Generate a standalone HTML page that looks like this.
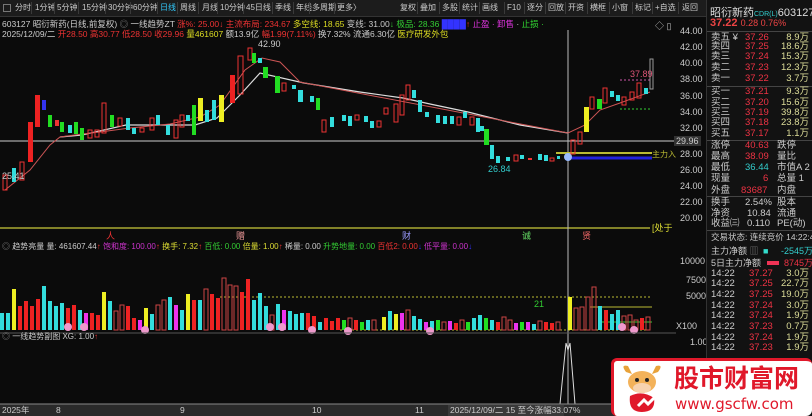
<!DOCTYPE html><html><head><meta charset="utf-8"><style>
*{margin:0;padding:0;box-sizing:border-box}
body{width:812px;height:416px;background:#0b0b0b;overflow:hidden;position:relative;font-family:"Liberation Sans","Noto Sans CJK SC",sans-serif;font-size:9px;color:#ccc}
.a{position:absolute;white-space:nowrap}
#tb{position:absolute;left:0;top:0;width:706px;height:17px;background:#1c1c1c;border-bottom:1px solid #333;font-size:8px;color:#ccc;white-space:nowrap;overflow:hidden}
#tb span{position:absolute;top:3px;line-height:10px}
#tb i{position:absolute;top:2px;height:12px;border-left:1px solid #3a3a3a}
#rp{position:absolute;left:706px;top:0;width:106px;height:416px;background:#121212;border-left:1px solid #333}
.r{position:absolute;left:4px;width:102px;font-size:9.5px;height:12px;line-height:12px;white-space:nowrap}
.r b{font-weight:normal;position:absolute}
.sep{position:absolute;left:0;width:106px;border-top:1px solid #444}
.ax{position:absolute;left:680px;font-size:9px;color:#ccc}
</style></head><body>
<div id="tb"><span style="left:3px;top:4px;width:8px;height:8px;border:1px solid #777"></span>
<span style="left:15px">分时</span><span style="left:35px">1分钟</span><span style="left:57px">5分钟</span><span style="left:82px">15分钟</span><span style="left:108px">30分钟</span><span style="left:133px">60分钟</span><span style="left:160px;color:#3cf">日线</span><span style="left:180px">周线</span><span style="left:202px">月线</span><span style="left:220px">10分钟</span><span style="left:246px">45日线</span><span style="left:275px">季线</span><span style="left:296px">年线</span><span style="left:312px">多周期</span><span style="left:337px">更多〉</span>
<span style="left:400px">复权</span><span style="left:420px">叠加</span><span style="left:442px">多股</span><span style="left:462px">统计</span><span style="left:482px">画线</span><span style="left:507px">F10</span><span style="left:527px">逐分</span><span style="left:548px">回放</span><span style="left:568px">开资</span><span style="left:590px">横框</span><span style="left:612px">小窗</span><span style="left:635px">标记</span><span style="left:655px">+自选</span><span style="left:682px">返回</span>
<i style="left:31px"></i><i style="left:54px"></i><i style="left:78px"></i><i style="left:105px"></i><i style="left:130px"></i><i style="left:157px"></i><i style="left:177px"></i><i style="left:198px"></i><i style="left:217px"></i><i style="left:243px"></i><i style="left:272px"></i><i style="left:293px"></i><i style="left:309px"></i><i style="left:334px"></i><i style="left:417px"></i><i style="left:439px"></i><i style="left:459px"></i><i style="left:479px"></i><i style="left:504px"></i><i style="left:524px"></i><i style="left:545px"></i><i style="left:565px"></i><i style="left:587px"></i><i style="left:609px"></i><i style="left:632px"></i><i style="left:652px"></i><i style="left:678px"></i>
</div>
<div class="a" style="left:2px;top:18px;font-size:8.5px">603127 昭衍新药(日线,前复权) <span style="color:#888">◎</span> 一线趋势ZT <span style="color:#e33">涨%: 25.00</span><span style="color:#e33">↓</span> <span style="color:#e33">主流布局: 234.67</span> <span style="color:#dd2">多空线: 18.65</span> 变线: 31.00<span style="color:#3c3">↓</span> <span style="color:#3c3">极品: 28.36</span> <span style="color:#33f">████</span><span style="color:#e33">↑</span> <span style="color:#d3d">止盈 · 卸售</span> · <span style="color:#3d3">止损 ·</span></div>
<div class="a" style="left:2px;top:28px;font-size:8.5px">2025/12/09/二 <span style="color:#e33">开28.50 高30.77 低28.50 收29.96</span> <span style="color:#dd2">量461607</span> 额13.9亿 <span style="color:#e33">幅1.99(7.11%)</span> 换7.32% 流通6.30亿 <span style="color:#dd2">医疗研发外包</span></div>
<div class="a" style="left:655px;top:19px;color:#bbb">◇ ▯</div>
<svg class="a" style="left:0;top:0" width="676" height="416">
<line x1="0" y1="141" x2="676" y2="141" stroke="#ccc" stroke-width="1"/>
<line x1="0" y1="228" x2="650" y2="228" stroke="#aa3" stroke-width="1.5"/>
<line x1="568" y1="30" x2="568" y2="405" stroke="#bbb" stroke-width="1"/>
<line x1="556" y1="153" x2="652" y2="153" stroke="#bb3" stroke-width="2"/>
<line x1="568" y1="158" x2="652" y2="158" stroke="#22d" stroke-width="3"/>
<circle cx="568" cy="157" r="4" fill="#9bf"/>
<line x1="620" y1="80" x2="650" y2="80" stroke="#c5a" stroke-dasharray="2,2"/>
<line x1="620" y1="109" x2="650" y2="109" stroke="#3c3" stroke-dasharray="2,2"/>
<polyline fill="none" stroke="#ddd" stroke-width="1.2" points="60,137 82,135 126,125 195,125 217,118 240,95 260,73 304,83 360,92 403,98 430,104 468,112 520,125 568,133"/>
<polyline fill="none" stroke="#c55" stroke-width="1" points="5,190 30,170 50,145 60,137 82,134 100,132 130,128 170,124 200,117 220,105 245,70 262,58 280,62 300,82 568,133 585,125 600,110 620,103 650,92"/>
<g stroke-width="1">
<rect x="3" y="175" width="4" height="15" fill="none" stroke="#e33"/><rect x="12" y="168" width="4" height="14" fill="#3dd"/><rect x="20" y="162" width="4" height="18" fill="none" stroke="#e33"/>
<rect x="28" y="122" width="5" height="40" fill="#e22"/><rect x="35" y="95" width="5" height="32" fill="#e22"/><rect x="42" y="100" width="4" height="10" fill="#33e"/>
<rect x="48" y="115" width="4" height="12" fill="#2d2"/><rect x="55" y="120" width="4" height="6" fill="#e33"/><rect x="60" y="122" width="4" height="10" fill="#2d2"/>
<rect x="68" y="125" width="4" height="8" fill="#3dd"/><rect x="74" y="122" width="4" height="12" fill="#2d2"/><rect x="80" y="128" width="4" height="12" fill="#2d2"/>
<rect x="88" y="130" width="4" height="8" fill="none" stroke="#e33"/><rect x="95" y="130" width="4" height="7" fill="none" stroke="#e33"/><rect x="102" y="103" width="4" height="30" fill="none" stroke="#e33"/>
<rect x="110" y="115" width="4" height="12" fill="#2d2"/><rect x="118" y="118" width="4" height="8" fill="none" stroke="#e33"/><rect x="126" y="118" width="4" height="12" fill="#3dd"/>
<rect x="132" y="128" width="4" height="6" fill="#3dd"/><rect x="140" y="128" width="4" height="4" fill="none" stroke="#e33"/><rect x="150" y="118" width="4" height="12" fill="none" stroke="#e33"/>
<rect x="156" y="115" width="4" height="10" fill="#3dd"/><rect x="166" y="125" width="4" height="10" fill="#3dd"/><rect x="174" y="120" width="4" height="18" fill="none" stroke="#e33"/>
<rect x="180" y="115" width="4" height="12" fill="none" stroke="#e33"/><rect x="186" y="115" width="4" height="6" fill="#3dd"/><rect x="192" y="105" width="4" height="30" fill="#2d2"/>
<rect x="198" y="98" width="5" height="23" fill="#ee2"/><rect x="205" y="110" width="4" height="12" fill="#3dd"/><rect x="212" y="100" width="4" height="20" fill="#3dd"/>
<rect x="219" y="95" width="5" height="27" fill="#ee2"/><rect x="230" y="75" width="5" height="28" fill="#e22"/><rect x="238" y="56" width="5" height="38" fill="none" stroke="#e33"/>
<rect x="248" y="48" width="4" height="12" fill="none" stroke="#e33"/><rect x="252" y="53" width="4" height="10" fill="#2d2"/><rect x="258" y="58" width="4" height="5" fill="#3dd"/>
<rect x="263" y="67" width="5" height="11" fill="#2d2"/><rect x="275" y="76" width="5" height="17" fill="#2d2"/><rect x="282" y="83" width="4" height="8" fill="none" stroke="#e33"/>
<rect x="292" y="85" width="4" height="4" fill="#3dd"/><rect x="298" y="90" width="5" height="12" fill="#3dd"/><rect x="310" y="96" width="4" height="6" fill="#3dd"/>
<rect x="316" y="98" width="4" height="12" fill="#2d2"/><rect x="322" y="120" width="4" height="12" fill="none" stroke="#e33"/><rect x="330" y="117" width="4" height="10" fill="#3dd"/>
<rect x="342" y="115" width="4" height="6" fill="#3dd"/><rect x="348" y="116" width="4" height="10" fill="#3dd"/><rect x="355" y="115" width="4" height="5" fill="none" stroke="#e33"/>
<rect x="364" y="116" width="4" height="6" fill="#3dd"/><rect x="370" y="121" width="4" height="7" fill="#3dd"/><rect x="377" y="121" width="4" height="6" fill="none" stroke="#e33"/>
<rect x="384" y="108" width="4" height="6" fill="none" stroke="#e33"/><rect x="394" y="104" width="4" height="18" fill="none" stroke="#e33"/><rect x="400" y="95" width="4" height="20" fill="none" stroke="#e33"/>
<rect x="406" y="85" width="4" height="15" fill="none" stroke="#e33"/><rect x="412" y="90" width="4" height="8" fill="#3dd"/><rect x="418" y="100" width="4" height="12" fill="#3dd"/>
<rect x="425" y="112" width="4" height="5" fill="#3dd"/><rect x="436" y="115" width="4" height="8" fill="#3dd"/><rect x="443" y="116" width="4" height="8" fill="#3dd"/>
<rect x="450" y="116" width="4" height="8" fill="#3dd"/><rect x="457" y="117" width="4" height="8" fill="none" stroke="#e33"/><rect x="463" y="112" width="4" height="6" fill="#3dd"/>
<rect x="470" y="117" width="4" height="8" fill="none" stroke="#e33"/><rect x="476" y="118" width="4" height="14" fill="#3dd"/><rect x="480" y="126" width="4" height="5" fill="#3dd"/>
<rect x="484" y="129" width="5" height="16" fill="#2d2"/><rect x="490" y="145" width="4" height="14" fill="#3dd"/><rect x="496" y="156" width="4" height="7" fill="#3dd"/>
<rect x="506" y="157" width="4" height="4" fill="#3dd"/><rect x="514" y="155" width="4" height="6" fill="none" stroke="#e33"/><rect x="520" y="155" width="4" height="4" fill="#3dd"/>
<rect x="528" y="158" width="4" height="2" fill="#e33"/><rect x="538" y="154" width="4" height="6" fill="#3dd"/><rect x="544" y="155" width="4" height="6" fill="#3dd"/>
<rect x="550" y="158" width="4" height="3" fill="none" stroke="#e33"/><rect x="557" y="156" width="3" height="3" fill="#3dd"/><rect x="571" y="140" width="4" height="14" fill="none" stroke="#e33"/>
<rect x="578" y="132" width="4" height="12" fill="none" stroke="#e33"/><rect x="584" y="107" width="5" height="25" fill="#ee2"/><rect x="590" y="97" width="4" height="12" fill="none" stroke="#e33"/>
<rect x="597" y="99" width="5" height="10" fill="#2d2"/><rect x="603" y="88" width="4" height="15" fill="none" stroke="#e33"/><rect x="610" y="91" width="4" height="6" fill="#3dd"/>
<rect x="616" y="95" width="4" height="6" fill="#3dd"/><rect x="622" y="97" width="4" height="8" fill="none" stroke="#e33"/><rect x="630" y="92" width="4" height="8" fill="none" stroke="#e33"/>
<rect x="637" y="83" width="4" height="15" fill="none" stroke="#e33"/><rect x="644" y="88" width="4" height="6" fill="#3dd"/><rect x="650" y="59" width="3" height="30" fill="none" stroke="#999"/>
</g>
<text x="258" y="47" fill="#ccc" font-size="9">42.90</text><text x="488" y="172" fill="#3cc" font-size="9">26.84</text><text x="2" y="179" fill="#ccc" font-size="9">25.41</text><text x="630" y="77" fill="#d57" font-size="9">37.89</text>
<text x="652" y="157" fill="#bb3" font-size="8">主力入</text>
<text x="106" y="239" fill="#e33" font-size="9">人</text><text x="236" y="239" fill="#e99" font-size="9">赠</text><text x="402" y="239" fill="#99f" font-size="9">财</text><text x="522" y="239" fill="#6d6" font-size="9">诚</text><text x="582" y="239" fill="#e66" font-size="9">贤</text>
<text x="652" y="231" fill="#dd3" font-size="9">[处于</text>
<text x="2" y="249" fill="#ccc" font-size="8"><tspan fill="#888">◎</tspan> 趋势亮量 量: 461607.44<tspan fill="#e33">↑</tspan> <tspan fill="#c3c">饱和度: 100.00</tspan><tspan fill="#e33">↑</tspan> <tspan fill="#dd3">换手: 7.32</tspan><tspan fill="#e33">↑</tspan> <tspan fill="#3c3">百低: 0.00</tspan> <tspan fill="#dd3">倍量: 1.00</tspan><tspan fill="#e33">↑</tspan> 稀量: 0.00 <tspan fill="#3c3">升势地量: 0.00</tspan> <tspan fill="#e33">百低2: 0.00</tspan><tspan fill="#33f">↓</tspan> <tspan fill="#c3c">低平量: 0.00</tspan><tspan fill="#33f">↓</tspan></text>
<line x1="220" y1="297" x2="652" y2="297" stroke="#bb3" stroke-dasharray="2,2"/><line x1="340" y1="330" x2="652" y2="330" stroke="#bb3" stroke-dasharray="2,2"/><line x1="590" y1="307" x2="652" y2="307" stroke="#bb3"/><line x1="600" y1="322" x2="652" y2="322" stroke="#3c3"/>
<text x="534" y="307" fill="#3c3" font-size="9">21</text>
<g id="vol">
<rect x="0" y="313" width="4" height="17" fill="#3dd"/><rect x="6" y="313" width="4" height="17" fill="#3dd"/><rect x="12" y="289" width="4" height="41" fill="#ee2"/><rect x="18" y="306" width="4" height="24" fill="#e22"/><rect x="24" y="301" width="4" height="29" fill="#e22"/><rect x="30" y="306" width="4" height="24" fill="#e22"/><rect x="36" y="299" width="4" height="31" fill="#e22"/><rect x="42" y="286" width="4" height="44" fill="#3dd"/><rect x="48" y="301" width="4" height="29" fill="#3dd"/><rect x="54" y="306" width="4" height="24" fill="#3dd"/><rect x="60" y="303" width="4" height="27" fill="#3dd"/><rect x="66" y="308" width="4" height="22" fill="#e22"/><rect x="72" y="305" width="4" height="25" fill="#e22"/><rect x="78" y="310" width="4" height="20" fill="#3dd"/><rect x="84" y="313" width="4" height="17" fill="#e3e"/><rect x="90" y="313" width="4" height="17" fill="#e22"/><rect x="96" y="315" width="4" height="15" fill="#e22"/><rect x="102" y="292" width="4" height="38" fill="#ee2"/><rect x="108" y="301" width="4" height="29" fill="#3dd"/><rect x="114" y="311" width="4" height="19" fill="none" stroke="#c44"/><rect x="120" y="305" width="4" height="25" fill="none" stroke="#c44"/><rect x="126" y="306" width="4" height="24" fill="#e22"/><rect x="132" y="318" width="4" height="12" fill="#e22"/><rect x="138" y="320" width="4" height="10" fill="#e3e"/><rect x="144" y="308" width="4" height="22" fill="#ee2"/><rect x="150" y="314" width="4" height="16" fill="#3dd"/><rect x="156" y="305" width="4" height="25" fill="none" stroke="#c44"/><rect x="162" y="300" width="4" height="30" fill="none" stroke="#c44"/><rect x="168" y="297" width="4" height="33" fill="#3dd"/><rect x="174" y="305" width="4" height="25" fill="#e3e"/><rect x="180" y="310" width="4" height="20" fill="#3dd"/><rect x="186" y="294" width="4" height="36" fill="#ee2"/><rect x="192" y="300" width="4" height="30" fill="#e22"/><rect x="198" y="300" width="4" height="30" fill="#3dd"/><rect x="204" y="289" width="4" height="41" fill="none" stroke="#c44"/><rect x="210" y="294" width="4" height="36" fill="#e22"/><rect x="216" y="298" width="4" height="32" fill="#e22"/><rect x="222" y="278" width="4" height="52" fill="none" stroke="#c44"/><rect x="228" y="285" width="4" height="45" fill="none" stroke="#c44"/><rect x="234" y="286" width="4" height="44" fill="none" stroke="#c44"/><rect x="240" y="292" width="4" height="38" fill="#e22"/><rect x="246" y="279" width="4" height="51" fill="#e22"/><rect x="252" y="300" width="4" height="30" fill="#3dd"/><rect x="258" y="293" width="4" height="37" fill="#3dd"/><rect x="264" y="306" width="4" height="24" fill="#3dd"/><rect x="270" y="315" width="4" height="15" fill="none" stroke="#c44"/><rect x="276" y="304" width="4" height="26" fill="#3dd"/><rect x="282" y="310" width="4" height="20" fill="#e3e"/><rect x="288" y="311" width="4" height="19" fill="#3dd"/><rect x="294" y="314" width="4" height="16" fill="#3dd"/><rect x="300" y="313" width="4" height="17" fill="#3dd"/><rect x="306" y="313" width="4" height="17" fill="#e22"/><rect x="312" y="316" width="4" height="14" fill="#e22"/><rect x="318" y="322" width="4" height="8" fill="#3dd"/><rect x="324" y="318" width="4" height="12" fill="#e22"/><rect x="330" y="321" width="4" height="9" fill="#e22"/><rect x="336" y="318" width="4" height="12" fill="#e22"/><rect x="342" y="320" width="4" height="10" fill="#2d2"/><rect x="348" y="318" width="4" height="12" fill="none" stroke="#c44"/><rect x="354" y="320" width="4" height="10" fill="#e22"/><rect x="360" y="322" width="4" height="8" fill="#2d2"/><rect x="366" y="320" width="4" height="10" fill="#3dd"/><rect x="372" y="320" width="4" height="10" fill="none" stroke="#c44"/><rect x="382" y="317" width="4" height="13" fill="#ee2"/><rect x="388" y="311" width="4" height="19" fill="#3dd"/><rect x="394" y="314" width="4" height="16" fill="#ee2"/><rect x="400" y="313" width="4" height="17" fill="#e3e"/><rect x="406" y="310" width="4" height="20" fill="none" stroke="#c44"/><rect x="412" y="316" width="4" height="14" fill="#3dd"/><rect x="418" y="319" width="4" height="11" fill="#3dd"/><rect x="424" y="322" width="4" height="8" fill="#e3e"/><rect x="430" y="321" width="4" height="9" fill="#3dd"/><rect x="436" y="320" width="4" height="10" fill="#2d2"/><rect x="442" y="322" width="4" height="8" fill="none" stroke="#c44"/><rect x="448" y="321" width="4" height="9" fill="#e3e"/><rect x="454" y="323" width="4" height="7" fill="#e22"/><rect x="460" y="320" width="4" height="10" fill="none" stroke="#c44"/><rect x="466" y="322" width="4" height="8" fill="#2d2"/><rect x="472" y="318" width="4" height="12" fill="#3dd"/><rect x="478" y="315" width="4" height="15" fill="#3dd"/><rect x="484" y="318" width="4" height="12" fill="#2d2"/><rect x="490" y="320" width="4" height="10" fill="#3dd"/><rect x="496" y="322" width="4" height="8" fill="#e22"/><rect x="502" y="317" width="4" height="13" fill="none" stroke="#c44"/><rect x="508" y="320" width="4" height="10" fill="none" stroke="#c44"/><rect x="514" y="323" width="4" height="7" fill="#e3e"/><rect x="520" y="322" width="4" height="8" fill="#2d2"/><rect x="526" y="322" width="4" height="8" fill="#e3e"/><rect x="532" y="324" width="4" height="6" fill="#3dd"/><rect x="538" y="321" width="4" height="9" fill="none" stroke="#c44"/><rect x="544" y="322" width="4" height="8" fill="#e22"/><rect x="550" y="323" width="4" height="7" fill="#e22"/><rect x="556" y="322" width="4" height="8" fill="none" stroke="#c44"/><rect x="568" y="297" width="4" height="33" fill="#ee2"/><rect x="574" y="308" width="4" height="22" fill="none" stroke="#c44"/><rect x="580" y="307" width="4" height="23" fill="none" stroke="#c44"/><rect x="586" y="297" width="4" height="33" fill="none" stroke="#c44"/><rect x="592" y="287" width="4" height="43" fill="none" stroke="#c44"/><rect x="598" y="306" width="4" height="24" fill="#3dd"/><rect x="604" y="310" width="4" height="20" fill="#e22"/><rect x="610" y="314" width="4" height="16" fill="#3dd"/><rect x="616" y="310" width="4" height="20" fill="#3dd"/><rect x="622" y="316" width="4" height="14" fill="none" stroke="#c44"/><rect x="628" y="315" width="4" height="15" fill="none" stroke="#c44"/><rect x="634" y="320" width="4" height="10" fill="none" stroke="#c44"/><rect x="640" y="318" width="4" height="12" fill="#e22"/><rect x="646" y="317" width="4" height="13" fill="none" stroke="#c44"/>
</g>
<g fill="#e9c"><circle cx="68" cy="327" r="4"/><circle cx="84" cy="327" r="4"/><circle cx="145" cy="330" r="4"/><circle cx="270" cy="327" r="4"/><circle cx="282" cy="327" r="4"/><circle cx="312" cy="330" r="4"/><circle cx="348" cy="331" r="4"/><circle cx="430" cy="331" r="4"/><circle cx="622" cy="327" r="4"/><circle cx="634" cy="330" r="4"/></g>
<line x1="0" y1="333" x2="676" y2="333" stroke="#555"/>
<text x="2" y="339" fill="#ccc" font-size="8"><tspan fill="#888">◎</tspan> 一线趋势副图 XG: 1.00<tspan fill="#e33">↑</tspan></text>
<polyline fill="none" stroke="#ddd" stroke-width="1" points="0,404 560,404 566,343 568,350 570,343 575,404 612,404"/>
<rect x="0" y="404" width="676" height="12" fill="#2a2a2a"/>
<line x1="0" y1="404" x2="676" y2="404" stroke="#888"/>
<text x="2" y="413" fill="#ccc" font-size="8.5">2025年</text><text x="56" y="413" fill="#ccc" font-size="8.5">8</text><text x="180" y="413" fill="#ccc" font-size="8.5">9</text><text x="312" y="413" fill="#ccc" font-size="8.5">10</text><text x="415" y="413" fill="#ccc" font-size="8.5">11</text>
<rect x="448" y="405" width="116" height="11" fill="#3a3a3a"/><text x="450" y="413" fill="#ccc" font-size="8.5">2025/12/09/二 15 至今涨幅33.07%</text>
</svg>
<div class="ax" style="top:26px">44.00</div><div class="ax" style="top:42px">42.00</div><div class="ax" style="top:58px">40.00</div><div class="ax" style="top:74px">38.00</div><div class="ax" style="top:91px">36.00</div><div class="ax" style="top:107px">34.00</div><div class="ax" style="top:123px">32.00</div>
<div class="ax" style="top:136px;left:674px;background:#333;padding:0 2px">29.96</div>
<div class="ax" style="top:149px">28.00</div><div class="ax" style="top:165px">26.00</div><div class="ax" style="top:181px">24.00</div><div class="ax" style="top:197px">22.00</div><div class="ax" style="top:213px">20.00</div>
<div class="ax" style="top:256px">10000</div><div class="ax" style="top:275px;left:686px">7500</div><div class="ax" style="top:291px;left:686px">5000</div><div class="ax" style="top:321px;left:676px">X100</div><div class="ax" style="top:337px;left:690px">1.00</div>
<div id="rp">
<div class="a" style="left:3px;top:4px;font-size:11px;color:#ddd">昭衍新药<span style="font-size:7px;color:#3cc">CDR(L)</span>603127</div>
<div class="a" style="left:3px;top:17px;font-size:11px;color:#e44"><b>37.22</b> <span style="font-size:9px">0.28 0.76%</span></div>
<div class="sep" style="top:31px"></div>
<div class="r" style="top:32px">卖五 ¥<b style="left:34px;color:#e34">37.26</b><b style="right:4px;color:#dd9">8.9万</b></div>
<div class="r" style="top:41px">卖四<b style="left:34px;color:#e34">37.25</b><b style="right:4px;color:#dd9">18.6万</b></div>
<div class="r" style="top:51px">卖三<b style="left:34px;color:#e34">37.24</b><b style="right:4px;color:#dd9">15.3万</b></div>
<div class="r" style="top:62px">卖二<b style="left:34px;color:#e34">37.23</b><b style="right:4px;color:#dd9">12.3万</b></div>
<div class="r" style="top:73px">卖一<b style="left:34px;color:#e34">37.22</b><b style="right:4px;color:#dd9">3.7万</b></div>
<div class="sep" style="top:86px"></div>
<div class="r" style="top:86px">买一<b style="left:34px;color:#e34">37.21</b><b style="right:4px;color:#dd9">9.3万</b></div>
<div class="r" style="top:97px">买二<b style="left:34px;color:#e34">37.20</b><b style="right:4px;color:#dd9">15.6万</b></div>
<div class="r" style="top:107px">买三<b style="left:34px;color:#e34">37.19</b><b style="right:4px;color:#dd9">39.8万</b></div>
<div class="r" style="top:117px">买四<b style="left:34px;color:#e34">37.18</b><b style="right:4px;color:#dd9">23.8万</b></div>
<div class="r" style="top:128px">买五<b style="left:34px;color:#e34">37.17</b><b style="right:4px;color:#dd9">1.1万</b></div>
<div class="sep" style="top:140px"></div>
<div class="r" style="top:140px">涨停<b style="left:34px;color:#e34">40.63</b><b style="left:66px">跌停</b></div>
<div class="r" style="top:151px">最高<b style="left:34px;color:#e34">38.09</b><b style="left:66px">量比</b></div>
<div class="r" style="top:162px">最低<b style="left:34px;color:#3cc">36.44</b><b style="left:66px">市值A 2</b></div>
<div class="r" style="top:173px">现量<b style="left:52px;color:#e34">6</b><b style="left:66px">总量 1</b></div>
<div class="r" style="top:185px">外盘<b style="left:30px;color:#e34">83687</b><b style="left:66px">内盘</b></div>
<div class="sep" style="top:196px"></div>
<div class="r" style="top:197px">换手<b style="left:34px">2.54%</b><b style="left:66px">股本</b></div>
<div class="r" style="top:208px">净资<b style="left:36px">10.84</b><b style="left:66px">流通</b></div>
<div class="r" style="top:218px">收益㈢<b style="left:36px">0.110</b><b style="left:66px">PE(动)</b></div>
<div class="sep" style="top:230px"></div>
<div class="r" style="top:231px;font-size:8.5px">交易状态: 连续竞价 14:22:45</div>
<div class="r" style="top:245px;font-size:9px">主力净额 <span style="color:#777">▥</span><b style="left:52px;color:#3dc">■</b><b style="right:0;color:#3cc">-2545万</b></div>
<div class="r" style="top:257px;font-size:9px">5日主力净额<b style="left:56px;width:12px;height:4px;top:4px;background:#e35"></b><b style="right:0;color:#e34">8745万</b></div>
<div class="r" style="top:268px">14:22<b style="left:38px;color:#e34">37.27</b><b style="right:4px;color:#dd9">3.0万</b></div>
<div class="r" style="top:278px">14:22<b style="left:38px;color:#e34">37.25</b><b style="right:4px;color:#dd9">22.7万</b></div>
<div class="r" style="top:289px">14:22<b style="left:38px;color:#e34">37.25</b><b style="right:4px;color:#dd9">19.0万</b></div>
<div class="r" style="top:300px">14:22<b style="left:38px;color:#e34">37.24</b><b style="right:4px;color:#dd9">3.0万</b></div>
<div class="r" style="top:310px">14:22<b style="left:38px;color:#e34">37.24</b><b style="right:4px;color:#dd9">1.9万</b></div>
<div class="r" style="top:321px">14:22<b style="left:38px;color:#e34">37.23</b><b style="right:4px;color:#dd9">0.7万</b></div>
<div class="r" style="top:332px">14:22<b style="left:38px;color:#e34">37.24</b><b style="right:4px;color:#dd9">1.9万</b></div>
<div class="r" style="top:342px">14:22<b style="left:38px;color:#e34">37.23</b><b style="right:4px;color:#dd9">1.9万</b></div>
</div>
<div class="a" style="left:611px;top:358px;width:201px;height:58px;background:#fff;border:3px solid #e0182a;border-radius:6px;border-right:none;border-bottom:none"></div>
<svg class="a" style="left:616px;top:362px" width="52" height="52" viewBox="0 0 52 52">
<path d="M10 10 Q4 2 12 4 L16 12Z M42 10 Q48 2 40 4 L36 12Z" fill="#e8a23a"/>
<ellipse cx="26" cy="20" rx="14" ry="11" fill="#f3b25a"/>
<ellipse cx="26" cy="26" rx="9" ry="5" fill="#f7d3b0"/>
<circle cx="21" cy="18" r="2" fill="#222"/><circle cx="31" cy="18" r="2" fill="#222"/>
<path d="M14 34 Q26 28 38 36 Q40 50 26 50 Q12 50 14 34Z" fill="#e0182a"/>
<path d="M22 44 L28 38 L32 42 L40 34" stroke="#fff" stroke-width="3" fill="none"/>
</svg>
<div class="a" style="left:674px;top:362px;font-size:25px;font-weight:bold;color:#e0182a;font-family:'Noto Sans CJK SC',sans-serif;line-height:30px">股市财富网</div>
<div class="a" style="left:675px;top:395px;font-size:15px;color:#e0182a;line-height:18px;font-family:'DejaVu Sans',sans-serif">www.gscfw.com</div>
</body></html>
